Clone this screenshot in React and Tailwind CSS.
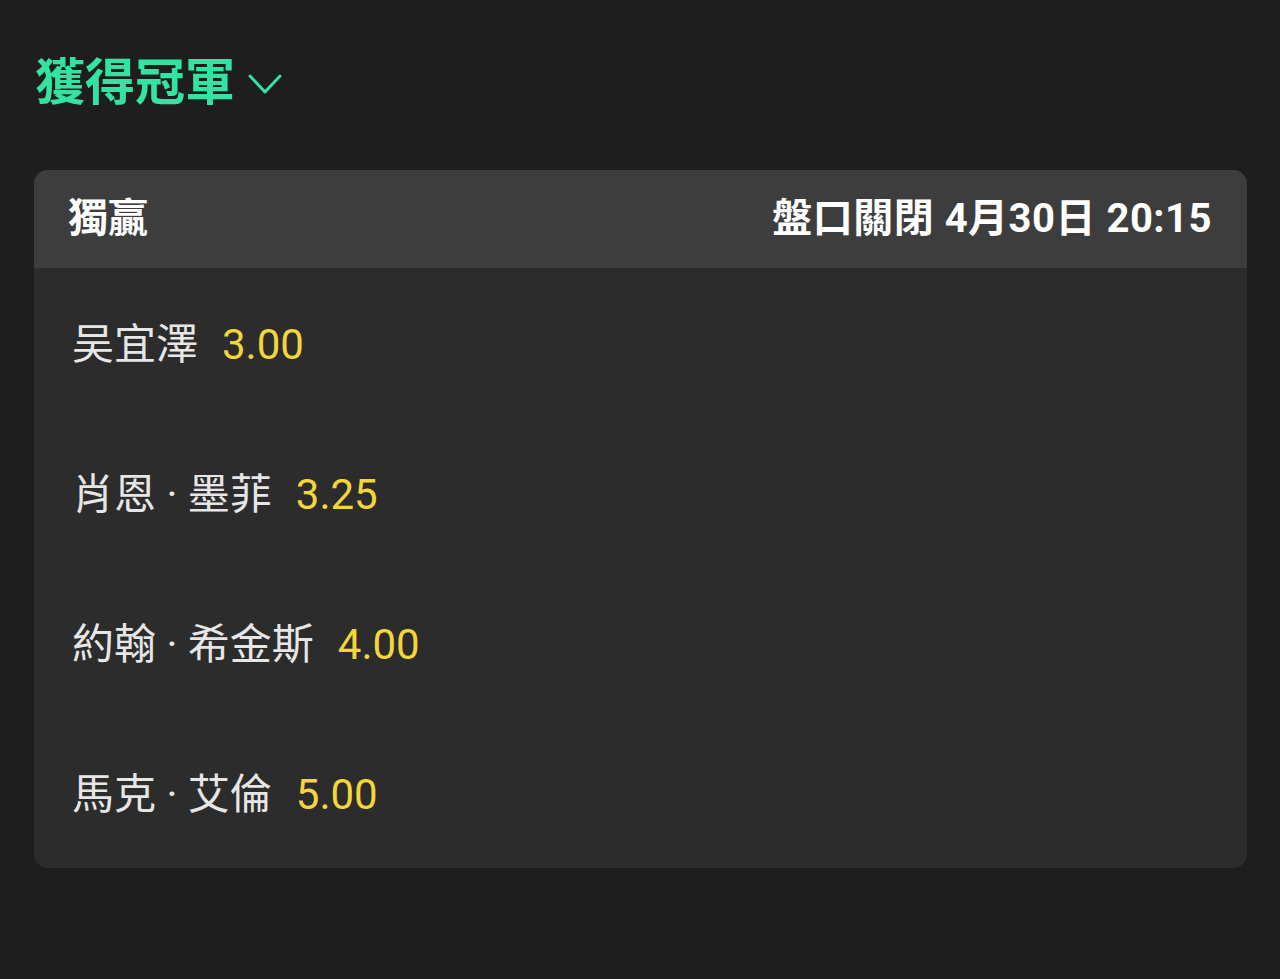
import React from 'react';

const FONT = { fontFamily: 'Roboto, "Noto Sans CJK TC", sans-serif' };

const rows = [
  { name: '吴宜澤', odds: '3.00' },
  { name: '肖恩 · 墨菲', odds: '3.25' },
  { name: '約翰 · 希金斯', odds: '4.00' },
  { name: '馬克 · 艾倫', odds: '5.00' },
];

export default function App() {
  return (
    <div className="min-h-[979px] w-full bg-[#1e1e1e] px-[34px] pt-[51px]" style={FONT}>
      <div className="flex h-[64px] items-center pl-[1px]">
        <span className="text-[50px] font-bold leading-none text-[#33e3a2]">獲得冠軍</span>
        <svg className="ml-[13px] mt-[2px]" width="34" height="24" viewBox="0 0 34 24" fill="none">
          <path d="M2 4 L17 20 L32 4" stroke="#33e3a2" strokeWidth="3" strokeLinecap="round" strokeLinejoin="round" />
        </svg>
      </div>

      <div className="mt-[55px] w-[1213px] overflow-hidden rounded-[14px] bg-[#2c2c2c]">
        <div className="flex h-[98px] items-center justify-between bg-[#3d3d3d] pl-[34px] pr-[35px]">
          <span className="text-[40px] font-bold leading-none text-white">獨贏</span>
          <span className="text-[40px] font-bold leading-none tracking-[0.5px] text-white">盤口關閉 4月30日 20:15</span>
        </div>
        {rows.map((r) => (
          <div key={r.name} className="flex h-[150px] items-center gap-[24px] pl-[38px] pt-[4px]">
            <span className="text-[42px] leading-none text-[#e6e6e6]">{r.name}</span>
            <span className="text-[42px] leading-none text-[#f3d63a]">{r.odds}</span>
          </div>
        ))}
      </div>
    </div>
  );
}
